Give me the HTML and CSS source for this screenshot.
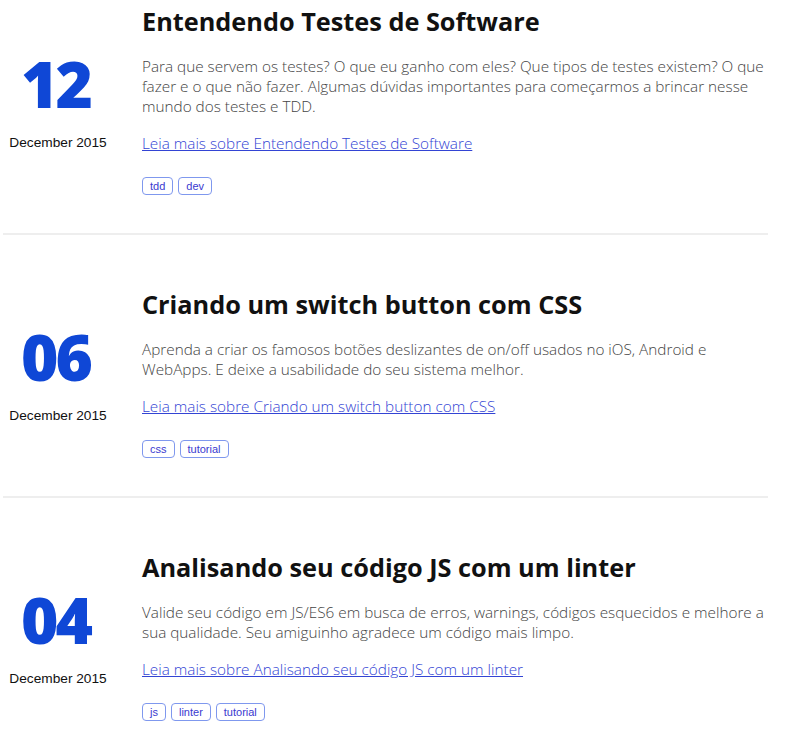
FILE: index.html
```html
<!DOCTYPE html>
<html lang="pt-BR">
<head>
<meta charset="utf-8">
<title>Posts</title>
<link rel="stylesheet" href="styles.css">
</head>
<body>
<main class="posts">
  <article class="post">
    <div class="post-date">
      <span class="day">12</span>
      <span class="month">December 2015</span>
    </div>
    <div class="post-body">
      <h2 class="title">Entendendo Testes de Software</h2>
      <p class="desc">Para que servem os testes? O que eu ganho com eles? Que tipos de testes existem? O que fazer e o que não fazer. Algumas dúvidas importantes para começarmos a brincar nesse mundo dos testes e TDD.</p>
      <a class="more" href="#">Leia mais sobre Entendendo Testes de Software</a>
      <ul class="tags">
        <li class="tag">tdd</li>
        <li class="tag">dev</li>
      </ul>
    </div>
  </article>
  <article class="post">
    <div class="post-date">
      <span class="day">06</span>
      <span class="month">December 2015</span>
    </div>
    <div class="post-body">
      <h2 class="title">Criando um switch button com CSS</h2>
      <p class="desc">Aprenda a criar os famosos botões deslizantes de on/off usados no iOS, Android e WebApps. E deixe a usabilidade do seu sistema melhor.</p>
      <a class="more" href="#">Leia mais sobre Criando um switch button com CSS</a>
      <ul class="tags">
        <li class="tag">css</li>
        <li class="tag">tutorial</li>
      </ul>
    </div>
  </article>
  <article class="post">
    <div class="post-date">
      <span class="day">04</span>
      <span class="month">December 2015</span>
    </div>
    <div class="post-body">
      <h2 class="title">Analisando seu código JS com um linter</h2>
      <p class="desc">Valide seu código em JS/ES6 em busca de erros, warnings, códigos esquecidos e melhore a sua qualidade. Seu amiguinho agradece um código mais limpo.</p>
      <a class="more" href="#">Leia mais sobre Analisando seu código JS com um linter</a>
      <ul class="tags">
        <li class="tag">js</li>
        <li class="tag">linter</li>
        <li class="tag">tutorial</li>
      </ul>
    </div>
  </article>
</main>
</body>
</html>
```

FILE: styles.css
```css
html, body {
  margin: 0;
  padding: 0;
  background: #fff;
}

.posts {
  width: 765px;
  margin: -48px 0 0 3px;
}

.post {
  display: flex;
  align-items: center;
  gap: 29px;
  padding: 55px 0 38px;
  border-bottom: 2px solid #eeeeee;
}

.post-date {
  width: 110px;
  flex: none;
  display: flex;
  flex-direction: column;
  align-items: center;
}

.day {
  font-family: "Open Sans", sans-serif;
  font-weight: 800;
  font-size: 64px;
  line-height: 1;
  letter-spacing: -3px;
  margin-right: 5px;
  color: #0f47d6;
}

.month {
  margin-top: 19px;
  font-family: "Liberation Sans", Arial, sans-serif;
  font-size: 13.7px;
  line-height: 15px;
  color: #111;
}

.post-body {
  flex: 1;
  min-width: 0;
  font-family: "Open Sans", sans-serif;
}

.title {
  margin: 0;
  font-size: 25.3px;
  line-height: 29px;
  font-weight: 700;
  color: #111;
}

.desc {
  margin: 20px 0 0;
  font-size: 15.3px;
  line-height: 20px;
  font-weight: 300;
  color: #444;
}

.more {
  display: block;
  margin-top: 17px;
  font-size: 15.3px;
  line-height: 20px;
  font-weight: 300;
  color: #3344d4;
  text-decoration: underline;
}

.tags {
  list-style: none;
  margin: 24px 0 0;
  padding: 0;
  display: flex;
  gap: 5px;
}

.tag {
  font-family: "Liberation Sans", Arial, sans-serif;
  font-size: 11px;
  line-height: 16px;
  padding: 0 7px;
  border: 1px solid #7f98ee;
  border-radius: 4px;
  color: #3a3ad0;
}
```
